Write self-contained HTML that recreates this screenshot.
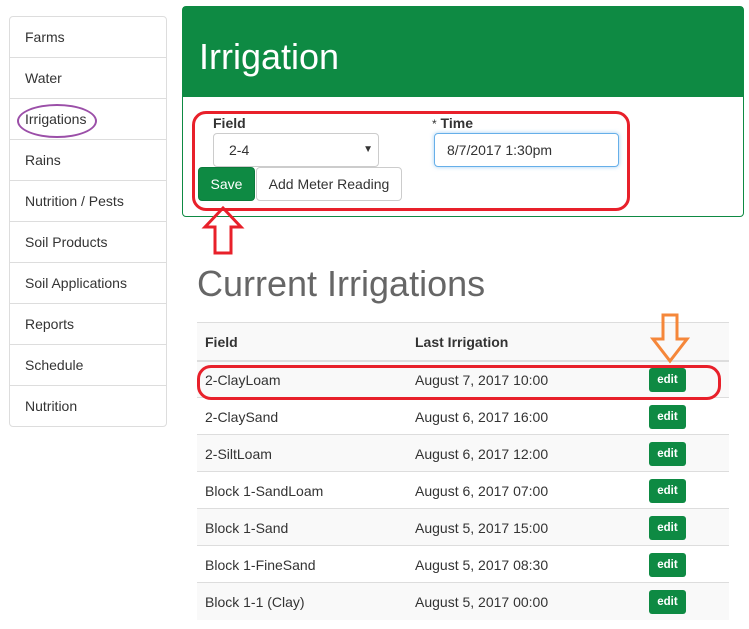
<!DOCTYPE html>
<html><head><style>
body{margin:0;width:749px;height:629px;background:#fff;font-family:"Liberation Sans",sans-serif;font-size:14px;color:#333;position:relative;overflow:hidden}
.side{position:absolute;left:9px;top:16px;width:156px;border:1px solid #ddd;border-radius:4px}
.side div{height:40px;line-height:40px;padding-left:15px;border-top:1px solid #ddd}
.side div:first-child{border-top:none}
.panel{position:absolute;left:182px;top:6px;width:560px;height:209px;border:1px solid #0e8a43;border-radius:4px}
.ph{background:#0e8a43;height:90px;color:#fff;font-size:36px;line-height:100px;padding-left:16px}
.abs{position:absolute}
.btn{position:absolute;height:32px;line-height:32px;border-radius:4px;font-size:14px;text-align:center;box-sizing:border-box}
table{position:absolute;left:197px;top:322px;width:532px;border-collapse:collapse;font-size:14px}
td,th{padding:0 8px;text-align:left;border-top:1px solid #ddd;box-sizing:border-box}
td{height:37px;padding-top:1px}
th{border-bottom:2px solid #ddd;background:#f9f9f9;height:38px;padding-top:1px}
tr:nth-child(even) td{background:#f9f9f9}
.e{display:inline-block;background:#0e8a43;color:#fff;font-size:11.5px;font-weight:bold;width:37px;height:24px;line-height:24px;text-align:center;border-radius:3px}
</style></head><body>
<div class="side">
<div>Farms</div><div>Water</div><div>Irrigations</div><div>Rains</div><div>Nutrition / Pests</div><div>Soil Products</div><div>Soil Applications</div><div>Reports</div><div>Schedule</div><div>Nutrition</div>
</div>
<div class="abs" style="left:17px;top:104px;width:76px;height:30px;border:2px solid #9b4fa8;border-radius:50%"></div>
<div class="panel"><div class="ph">Irrigation</div></div>
<div class="abs" style="left:213px;top:115px;font-weight:bold">Field</div>
<div class="abs" style="left:432px;top:115px;font-weight:bold"><span style="font-weight:normal;font-size:12px">*</span> Time</div>
<div class="abs" style="left:213px;top:133px;width:166px;height:34px;box-sizing:border-box;border:1px solid #ccc;border-radius:4px;line-height:32px;text-indent:15px">2-4<span style="position:absolute;right:5px;font-size:10px">▼</span></div>
<div class="abs" style="left:434px;top:133px;width:185px;height:34px;box-sizing:border-box;border:1px solid #66afe9;border-radius:4px;line-height:32px;text-indent:12px;box-shadow:0 0 4px rgba(102,175,233,.6)">8/7/2017 1:30pm</div>
<div class="btn" style="left:198px;top:167px;width:57px;height:34px;background:#0e8a43;color:#fff;border:1px solid #0b7a3b">Save</div>
<div class="btn" style="left:256px;top:167px;width:146px;height:34px;border:1px solid #ccc">Add Meter Reading</div>
<div class="abs" style="left:192px;top:111px;width:432px;height:94px;border:3px solid #e8202a;border-radius:14px"></div>
<svg class="abs" style="left:200px;top:205px" width="46" height="50"><path d="M23 3 L41 22 L31 22 L31 48 L15 48 L15 22 L5 22 Z" fill="none" stroke="#e8202a" stroke-width="3"/></svg>
<div class="abs" style="left:197px;top:263px;font-size:36px;color:#666">Current Irrigations</div>
<table>
<colgroup><col style="width:210px"><col style="width:234px"><col></colgroup>
<tr><th>Field</th><th>Last Irrigation</th><th></th></tr>
<tr><td>2-ClayLoam</td><td>August 7, 2017 10:00</td><td><span class="e">edit</span></td></tr>
<tr><td>2-ClaySand</td><td>August 6, 2017 16:00</td><td><span class="e">edit</span></td></tr>
<tr><td>2-SiltLoam</td><td>August 6, 2017 12:00</td><td><span class="e">edit</span></td></tr>
<tr><td>Block 1-SandLoam</td><td>August 6, 2017 07:00</td><td><span class="e">edit</span></td></tr>
<tr><td>Block 1-Sand</td><td>August 5, 2017 15:00</td><td><span class="e">edit</span></td></tr>
<tr><td>Block 1-FineSand</td><td>August 5, 2017 08:30</td><td><span class="e">edit</span></td></tr>
<tr><td>Block 1-1 (Clay)</td><td>August 5, 2017 00:00</td><td><span class="e">edit</span></td></tr>
</table>
<div class="abs" style="left:197px;top:365px;width:518px;height:29px;border:3px solid #e8202a;border-radius:14px"></div>
<svg class="abs" style="left:650px;top:312px" width="40" height="52"><path d="M13 3 L27 3 L27 27 L37 27 L20 49 L3 27 L13 27 Z" fill="none" stroke="#f5873a" stroke-width="3"/></svg>
</body></html>
